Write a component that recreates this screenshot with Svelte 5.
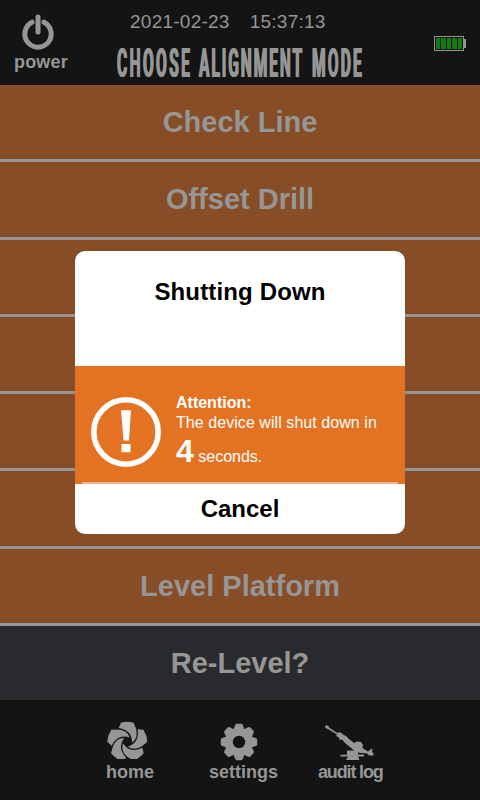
<script>
  const modes = ['Check Line', 'Offset Drill', '', '', '', '', 'Level Platform'];
  const cells = [0, 1, 2, 3, 4];
</script>

<div class="screen">
  <header>
    <div class="power">
      <svg width="34" height="38" viewBox="0 0 34 38" fill="none" stroke="#969696" stroke-linecap="round">
        <path d="M11 9.2A13.2 13.2 0 1 0 23 9.2" stroke-width="5" />
        <path d="M17 4V19" stroke-width="5" />
      </svg>
      <span>power</span>
    </div>
    <div class="heading">
      <div class="time"><span>2021-02-23</span><span>15:37:13</span></div>
      <div class="title">
        <div class="word choose"><span>CHOOSE</span></div>
        <div class="word alignment"><span>ALIGNMENT</span></div>
        <div class="word mode"><span>MODE</span></div>
      </div>
    </div>
    <div class="battery">
      <div class="cells">{#each cells as c (c)}<i></i>{/each}</div>
      <b></b>
    </div>
  </header>

  <main>
    {#each modes as mode}
      <div class="row">{mode}</div>
    {/each}
    <div class="row level">Re-Level?</div>
  </main>

  <footer>
    <div class="tab home">
      <svg width="42" height="38" viewBox="48 33 126 114">
        {#each cells as i (i)}
          <path transform="rotate({i * 72} 112 95)" d="M86 54L93 38Q112 33 131 38L138 56Q146 84 126 98Q127 61 86 54Z" fill="#969696" />
        {/each}
      </svg>
      <span>home</span>
    </div>
    <div class="tab settings">
      <svg width="38" height="38" viewBox="-19 -19 38 38">
        <g fill="#969696">
          {#each [0, 45, 90, 135, 180, 225, 270, 315] as a (a)}
            <path d="M-6 -11L-3.9 -16.8Q-3.3 -18.2 -2.2 -18.2H2.2Q3.3 -18.2 3.9 -16.8L6 -11Z" transform="rotate({a})" />
          {/each}
          <circle r="13.8" />
        </g>
        <circle r="6.2" fill="#141414" />
      </svg>
      <span>settings</span>
    </div>
    <div class="tab audit">
      <svg width="52" height="38" viewBox="0 0 52 38" fill="#969696">
        <path d="M0 1.5L1.5 0L3.5 1.2L4 2.4L12 7.8L15 7.2L17 8.4L18 9.6L21 11L24 14L29 18L32 16.5L36 17L38 20L37.5 23L43 26.5L46 24L47.5 24L47 27L49 29L48 30.5L44 30.5L42 28.5L38 28L35 28L29 25.5L25 22L20 18L17 14.5L14.5 15L14 12.5L11 11L12 9.5L3 4L0.5 3Z" />
        <path d="M22 25.5H33V29.5H39V31.5H33L34.5 35H21L23 31.5H15.5V29.8H22Z" />
      </svg>
      <span>audit log</span>
    </div>
  </footer>

  <div class="dialog">
    <div class="dtitle">Shutting Down</div>
    <div class="notice">
      <svg width="70" height="70" viewBox="0 0 70 70">
        <circle cx="35" cy="35" r="32.2" fill="none" stroke="#fff" stroke-width="5.6" />
        <path d="M30 13.3H40L38 43.5H32.5ZM30.5 47H39.5V55.3H30.5Z" fill="#fff" />
      </svg>
      <div class="message">
        <strong>Attention:</strong>
        <span>The device will shut down in</span>
        <div><b>4</b> seconds.</div>
      </div>
      <hr />
    </div>
    <div class="cancel">Cancel</div>
  </div>
</div>

<style>
  :global(body) { background: #141414; }
  .screen {
    position: relative;
    display: flex;
    flex-direction: column;
    width: 480px;
    height: 800px;
    overflow: hidden;
    background: #141414;
    color: #969696;
    font-family: "Liberation Sans", Arial, sans-serif;
  }
  svg { display: block; flex: none; }
  header { height: 85px; display: flex; }
  .power { width: 82px; padding-top: 13px; display: flex; flex-direction: column; align-items: center; font: bold 18px/20px "Liberation Sans", sans-serif; }
  .power svg { margin-left: -7px; }
  .power span { margin: 1px 0 0 0; letter-spacing: 0.2px; }
  .heading { width: 284px; padding-left: 34px; box-sizing: content-box; }
  .time { display: flex; gap: 20px; padding: 11px 0 0 14px; font-size: 19px; line-height: 22px; letter-spacing: 0.25px; }
  .title { display: flex; height: 40px; margin-top: 10px; padding-left: 1px; font: bold 41px/40px Roboto, sans-serif; text-shadow: -1px 0 #969696, 1.5px 0 #969696; }
  .word { height: 40px; }
  .word span { display: inline-block; transform: scaleX(0.38); transform-origin: 0 50%; white-space: nowrap; }
  .choose { width: 82px; letter-spacing: 6.2px; }
  .alignment { width: 113px; letter-spacing: 5px; }
  .mode { width: 52px; letter-spacing: 5.6px; }
  .battery { display: flex; align-items: center; height: 16px; margin: 35px 0 0 34px; }
  .cells { display: flex; gap: 1px; width: 30px; height: 15px; box-sizing: border-box; border: 1px solid #969696; padding: 1px; }
  .cells i { flex: 1; background: #127c12; }
  .battery b { width: 2px; height: 9px; background: #969696; }
  main { height: 615px; display: flex; flex-direction: column; gap: 3px; background: #969696; }
  .row { flex: 1; display: flex; align-items: center; justify-content: center; padding-top: 1px; background: #874d27; font-size: 29px; font-weight: bold; }
  .level { background: #292a2e; }
  footer { height: 100px; display: flex; }
  .tab { display: flex; flex-direction: column; font: bold 18px/20px "Liberation Sans", sans-serif; padding-top: 21px; }
  .tab span { margin-top: 3px; }
  .home { width: 103px; padding-left: 106px; }
  .settings { width: 109px; }
  .settings svg { margin: 2px 0 -2px 11px; }
  .audit svg { margin: 4px 0 -4px 7px; }
  .audit span { letter-spacing: -1.15px; }
  .dialog { position: absolute; left: 75px; top: 251px; width: 330px; height: 283px; border-radius: 10px; overflow: hidden; background: #fff; color: #000; display: flex; flex-direction: column; }
  .dtitle { height: 115px; box-sizing: border-box; padding-top: 27px; text-align: center; font: bold 24px/28px "Liberation Sans", sans-serif; letter-spacing: 0.15px; }
  .notice { position: relative; height: 118px; box-sizing: border-box; padding: 31px 0 0 16px; display: flex; gap: 15px; background: #e37222; color: #fff; }
  .message { margin-top: -4px; font-size: 16px; line-height: 20px; white-space: nowrap; }
  .message strong, .message span { display: block; }
  .message span { letter-spacing: 0.06px; }
  .message div { line-height: 36px; }
  .message b { font-size: 32px; }
  hr { position: absolute; left: 7px; right: 7px; bottom: 0; height: 2px; margin: 0; border: 0; background: #e9b797; }
  .cancel { flex: 1; text-align: center; font: bold 24px/50px "Liberation Sans", sans-serif; }
</style>
